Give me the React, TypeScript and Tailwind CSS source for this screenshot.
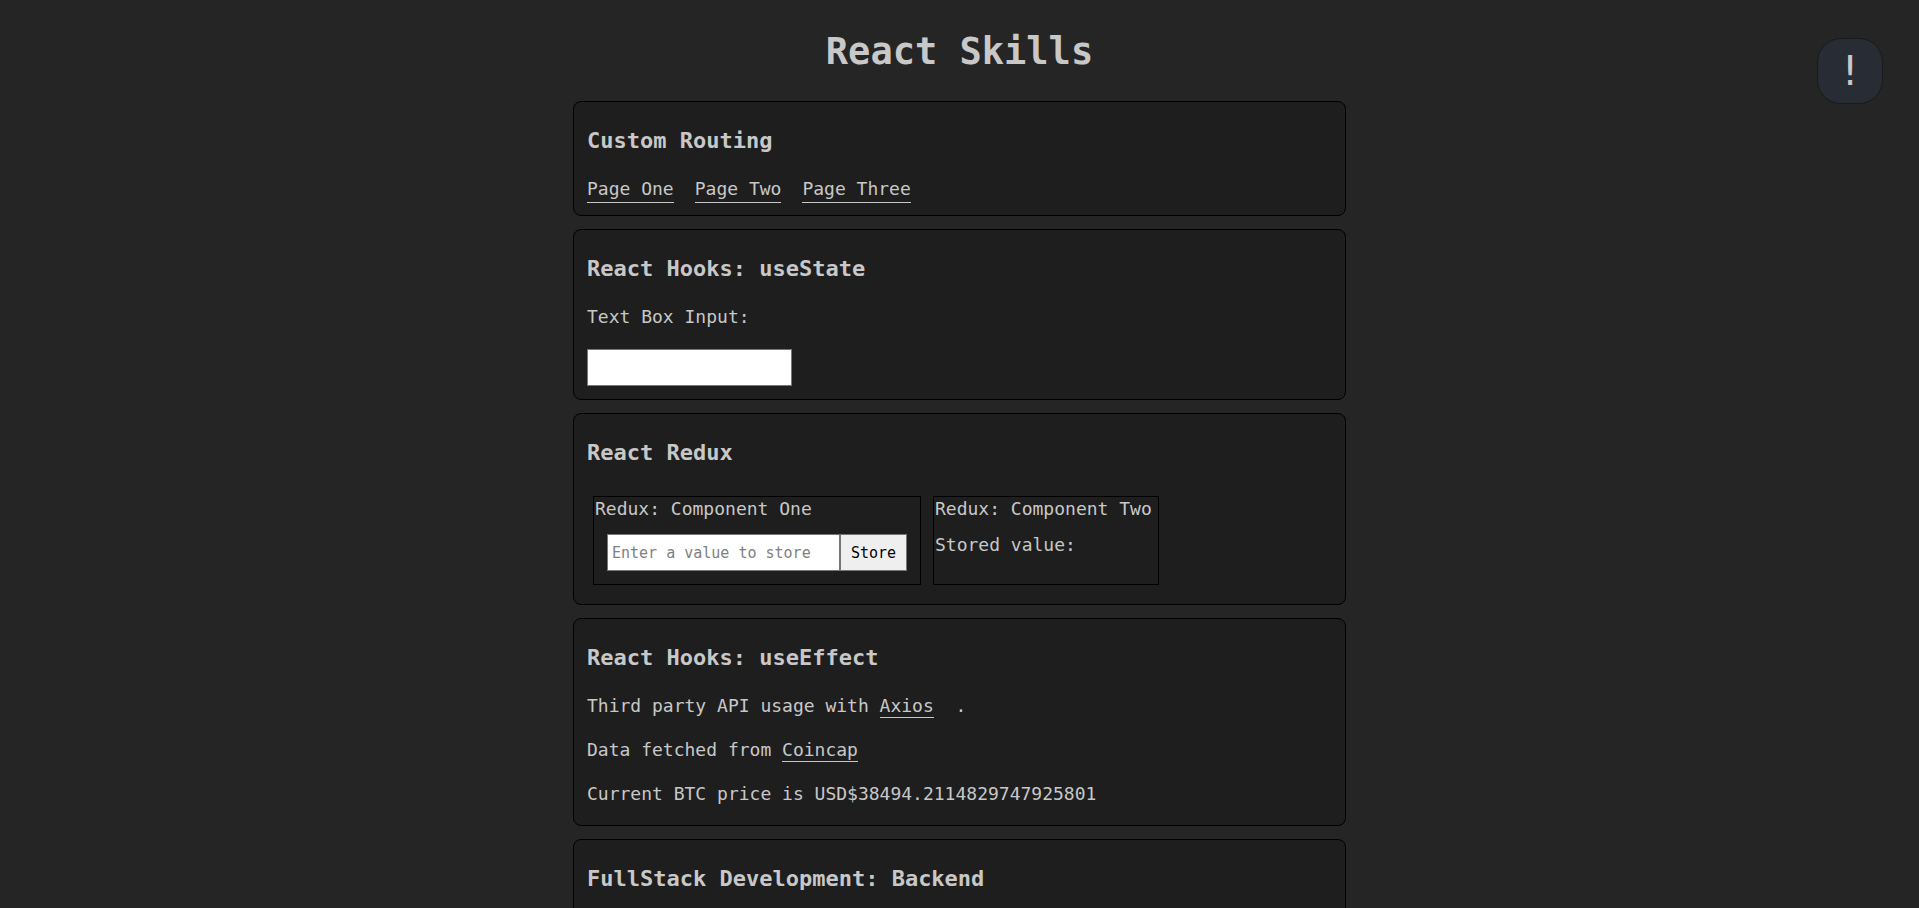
import { useState } from "react";
import type { ReactNode } from "react";

function Card({ title, children }: { title: string; children?: ReactNode }) {
  return (
    <section className="rounded-lg border border-black bg-[#1e1e1e] px-[13px] pt-[25px] pb-3">
      <h3 className="mb-[22px] text-[22px] leading-7 font-bold">{title}</h3>
      {children}
    </section>
  );
}

function TextLink({ href, children }: { href: string; children: ReactNode }) {
  return (
    <a href={href} className="border-b border-[#c8c8c8] pb-px hover:text-white">
      {children}
    </a>
  );
}

export default function App() {
  const [text, setText] = useState("");
  const [draft, setDraft] = useState("");
  const [stored, setStored] = useState("");

  return (
    <div className="h-screen overflow-y-auto bg-[#252525] font-['DejaVu_Sans_Mono',monospace] text-[18px] leading-6 text-[#c8c8c8] [scrollbar-width:none]">
      <main className="mx-auto flex w-full max-w-[773px] flex-col gap-[13px]">
        <h1 className="mt-[29px] mb-[13px] text-center text-[37px] leading-[46px] font-bold">
          React Skills
        </h1>

        <Card title="Custom Routing">
          <nav className="flex gap-[21px]">
            <TextLink href="#one">Page One</TextLink>
            <TextLink href="#two">Page Two</TextLink>
            <TextLink href="#three">Page Three</TextLink>
          </nav>
        </Card>

        <Card title="React Hooks: useState">
          <label htmlFor="text-box" className="mb-5 block">
            Text Box Input:
          </label>
          <input
            id="text-box"
            value={text}
            onChange={(e) => setText(e.target.value)}
            className="mb-px block h-[37px] w-[205px] border border-[#767676] bg-white px-1 text-[15px] text-black"
          />
          {text && <p className="mt-5">{text}</p>}
        </Card>

        <Card title="React Redux">
          <div className="mt-[29px] mb-[7px] ml-1.5 flex gap-3">
            <div className="w-[328px] border border-black">
              <p className="px-px">Redux: Component One</p>
              <form
                className="m-[13px] flex h-[37px]"
                onSubmit={(e) => {
                  e.preventDefault();
                  setStored(draft);
                }}
              >
                <input
                  aria-label="Value to store"
                  placeholder="Enter a value to store"
                  value={draft}
                  onChange={(e) => setDraft(e.target.value)}
                  className="min-w-0 flex-1 border border-[#767676] bg-white px-1 text-[15px] text-black placeholder:text-[#808080]"
                />
                <button
                  type="submit"
                  className="w-[67px] border border-[#767676] bg-[#efefef] text-[15px] text-black"
                >
                  Store
                </button>
              </form>
            </div>
            <div className="w-[226px] border border-black px-px">
              <p className="mb-3">Redux: Component Two</p>
              <p>Stored value: {stored}</p>
            </div>
          </div>
        </Card>

        <Card title="React Hooks: useEffect">
          <div className="mb-[7px] flex flex-col gap-5">
            <p>
              Third party API usage with <TextLink href="#axios">Axios</TextLink>
              {" \u00a0."}
            </p>
            <p>
              Data fetched from <TextLink href="#coincap">Coincap</TextLink>
            </p>
            <p>Current BTC price is USD$38494.2114829747925801</p>
          </div>
        </Card>

        <Card title="FullStack Development: Backend" />
      </main>

      <button
        type="button"
        aria-label="Information"
        className="fixed top-[38px] right-9 size-[66px] rounded-3xl border border-[#1a1a1a] bg-[#282c34] text-[40px] leading-none"
      >
        !
      </button>
    </div>
  );
}
